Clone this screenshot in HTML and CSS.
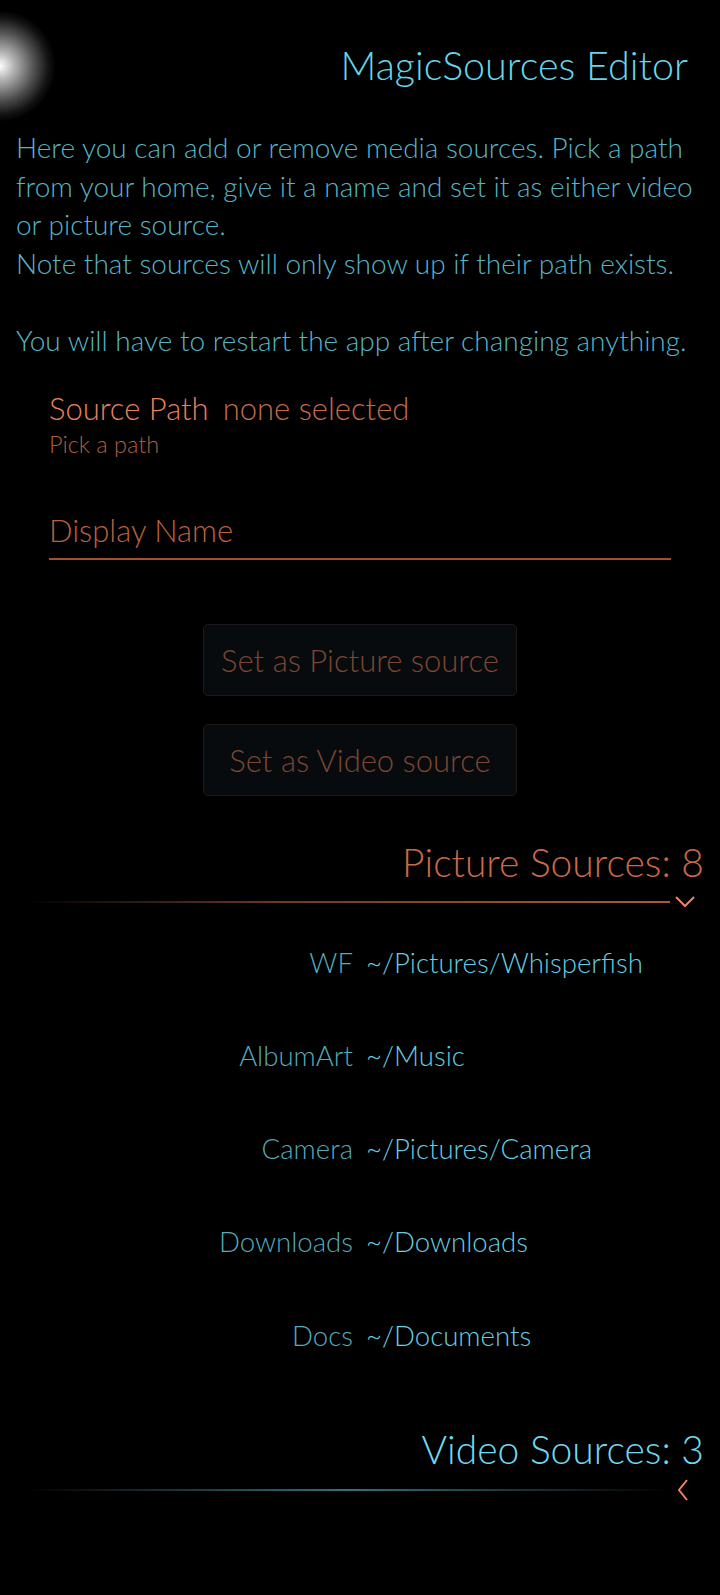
FILE: index.html
```html
<!DOCTYPE html>
<html>
<head>
<meta charset="utf-8">
<link rel="stylesheet" href="styles.css">
</head>
<body>
<div class="page">
  <div class="glow"></div>
  <header class="header">
    <h1 class="title">MagicSources Editor</h1>
  </header>
  <p class="intro">Here you can add or remove media sources. Pick a path from your home, give it a name and set it as either video or picture source.<br>Note that sources will only show up if their path exists.<br><br>You will have to restart the app after changing anything.</p>

  <div class="path-field">
    <div class="path-line"><span class="path-label">Source Path</span><span class="path-value">none selected</span></div>
    <div class="path-hint">Pick a path</div>
  </div>

  <div class="name-field">
    <div class="name-placeholder">Display Name</div>
  </div>

  <div class="buttons">
    <div class="btn">Set as Picture source</div>
    <div class="btn">Set as Video source</div>
  </div>

  <section class="section">
    <div class="section-head orange">Picture Sources: 8</div>
    <div class="section-rule">
      <div class="rule orange-rule"></div>
      <svg class="chev" width="22" height="14" viewBox="0 0 22 14"><path d="M2 2 L11 11 L20 2" fill="none" stroke="#f0845c" stroke-width="2"/></svg>
    </div>
    <div class="rows">
      <div class="row"><span class="row-label">WF</span><span class="row-value">~/Pictures/Whisperfish</span></div>
      <div class="row"><span class="row-label">AlbumArt</span><span class="row-value">~/Music</span></div>
      <div class="row"><span class="row-label">Camera</span><span class="row-value">~/Pictures/Camera</span></div>
      <div class="row"><span class="row-label">Downloads</span><span class="row-value">~/Downloads</span></div>
      <div class="row"><span class="row-label">Docs</span><span class="row-value">~/Documents</span></div>
    </div>
  </section>

  <section class="section video">
    <div class="section-head cyan">Video Sources: 3</div>
    <div class="section-rule">
      <div class="rule cyan-rule"></div>
      <svg class="chev chev-left" width="14" height="22" viewBox="0 0 14 22"><path d="M11 1 L3 11 L11 21" fill="none" stroke="#f0845c" stroke-width="2"/></svg>
    </div>
  </section>
</div>
</body>
</html>
```

FILE: styles.css
```css
html, body {
  margin: 0;
  padding: 0;
  background: #000;
}
body {
  width: 720px;
  min-height: 1595px;
  font-family: "Lato", "Source Sans Pro", "Noto Sans", sans-serif;
  font-weight: 300;
  overflow: hidden;
}
.page {
  position: relative;
  display: flex;
  flex-direction: column;
}
.glow {
  position: absolute;
  left: -55px;
  top: 11px;
  width: 110px;
  height: 110px;
  border-radius: 50%;
  background: radial-gradient(circle at center, rgba(255,255,255,1) 0%, rgba(255,255,255,0.7) 18%, rgba(255,255,255,0.3) 45%, rgba(255,255,255,0.08) 62%, rgba(255,255,255,0) 72%);
}
.header {
  display: flex;
  justify-content: flex-end;
  padding: 40px 32px 0 0;
  height: 62px;
}
.title {
  margin: 0;
  font-weight: 300;
  font-size: 39.5px;
  line-height: 50px;
  color: #66d5ec;
}
.intro {
  margin: 26px 0 0 0;
  padding: 0 16px;
  font-size: 28px;
  line-height: 38.6px;
  color: #55b5c6;
}
.path-field {
  padding: 0 0 0 49px;
  margin-top: 30px;
}
.path-line {
  display: flex;
  gap: 14px;
  font-size: 31px;
  line-height: 36px;
}
.path-label { color: #e8805a; }
.path-value { color: #c46a4a; }
.path-hint {
  font-size: 23.5px;
  line-height: 36px;
  color: #ae5f40;
}
.name-field {
  margin: 40px 49px 0 49px;
  border-bottom: 2px solid #a5502e;
  height: 56px;
  display: flex;
  align-items: flex-start;
}
.name-placeholder {
  font-size: 31px;
  line-height: 36px;
  padding-top: 10px;
  color: #b9613f;
}
.buttons {
  display: flex;
  flex-direction: column;
  align-items: center;
  gap: 28px;
  margin-top: 64px;
}
.btn {
  width: 312px;
  height: 70px;
  display: flex;
  align-items: center;
  justify-content: center;
  background: #070b0e;
  border: 1px solid #1d1a19;
  border-radius: 5px;
  font-size: 31px;
  color: #7c4632;
}
.section {
  display: flex;
  flex-direction: column;
}
.section-head {
  align-self: flex-end;
  padding-right: 16px;
  font-size: 39px;
  line-height: 46px;
  margin-top: 43px;
}
.orange { color: #c86a48; }
.cyan { color: #6fd9f0; }
.section-rule {
  display: flex;
  align-items: center;
  height: 22px;
  margin-top: 6px;
  padding: 0 24px 0 24px;
  gap: 4px;
}
.rule {
  flex: 1;
  height: 2px;
}
.orange-rule {
  background: linear-gradient(to right, rgba(200,106,72,0) 0%, rgba(200,106,72,0.55) 40%, rgba(200,106,72,0.85) 100%);
}
.cyan-rule {
  background: linear-gradient(to right, rgba(70,150,165,0) 0%, rgba(70,150,165,0.75) 50%, rgba(70,150,165,0) 100%);
}
.chev {
  flex: none;
  margin-right: 0;
}
.chev-left {
  margin-right: 6px;
}
.rows {
  display: flex;
  flex-direction: column;
  margin-top: 30px;
}
.row {
  display: grid;
  grid-template-columns: 353px 1fr;
  column-gap: 13px;
  height: 93.3px;
  font-size: 27.6px;
  line-height: 40px;
}
.row-label {
  text-align: right;
  color: #54aabb;
}
.row-value {
  color: #66cde2;
}
.video .section-head {
  margin-top: 17px;
}
.video .section-rule {
  margin-top: 7px;
}
```
